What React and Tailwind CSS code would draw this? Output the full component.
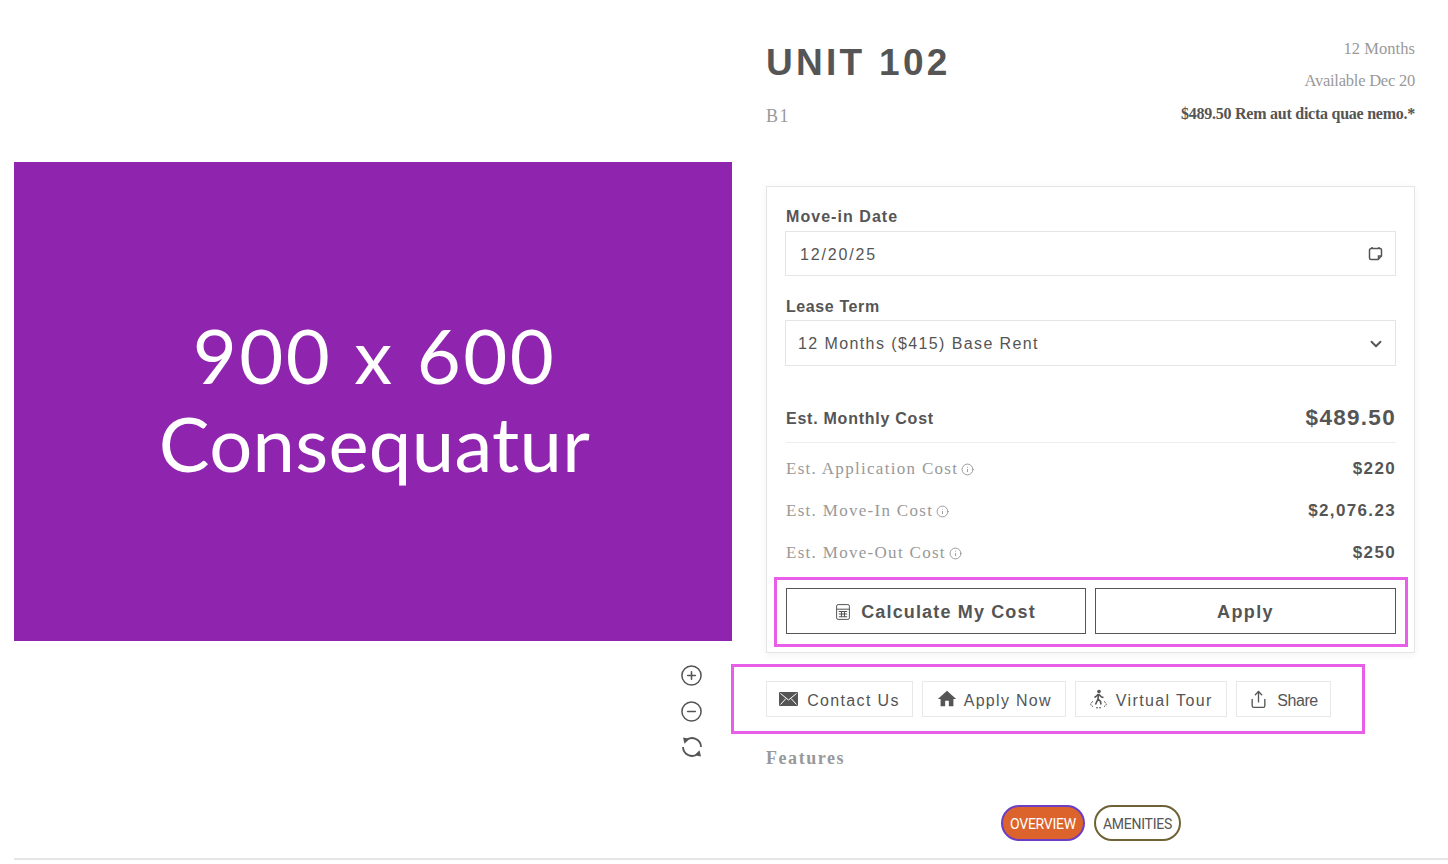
import { ChevronDown, CircleMinus, CirclePlus, Info, Share } from "lucide-react";
import { MdHome } from "react-icons/md";

const sans = "font-['Liberation_Sans',Arial,sans-serif]";
const serif = "font-['Liberation_Serif','Times_New_Roman',serif]";

const CalendarIcon = () => (
  <svg width="15" height="15" viewBox="0 0 15 15" fill="none" stroke="#555" strokeWidth="1.5">
    <path d="M3 2.5h9a1.5 1.5 0 0 1 1.5 1.5v6l-3.500 3.500H3a1.500 1.500 0 0 1-1.500-1.500V4A1.500 1.500 0 0 1 3 2.500z" />
    <path d="M13.500 10h-3v3.500" />
    <path d="M4 1v2M11 1v2" />
  </svg>
);

const CalculatorIcon = () => (
  <svg width="14" height="16" viewBox="0 0 14 16" fill="none" stroke="#555" strokeWidth="1">
    <rect x="0.600" y="0.600" width="12.800" height="14.800" rx="1.500" />
    <path d="M0.600 5.200h12.800" />
    <path d="M2.800 7.500h8.400M2.800 10h8.400M2.800 12.800h8.400M5.500 7v6.300M8.500 7v6.300" strokeWidth="1.100" />
  </svg>
);

const MailIcon = () => (
  <svg width="19" height="14" viewBox="0 0 19 14">
    <rect width="19" height="14" rx="1" fill="#555" />
    <path d="M1.500 1.500 9.500 8l8-6.500M1.500 12.500 7 6.500M17.500 12.500 12 6.500" fill="none" stroke="#fff" strokeWidth="1" />
  </svg>
);

const TourIcon = () => (
  <svg width="19" height="20" viewBox="0 0 19 20" fill="none" stroke="#555">
    <circle cx="10" cy="2.500" r="1.800" fill="#555" stroke="none" />
    <path d="M9.500 5 7 7.500l-1.500 1M9.500 5l3 3 2 .5M9.500 5l-.5 5 2.500 2.500 .5 3M9 10l-2.500 5.500" strokeWidth="1.600" />
    <path d="M4 12.500c-3 1.500-3 4 0 5M15 12.500c3 1.500 3 4 0 5M7 18.800h5" strokeWidth="1" strokeDasharray="2 1" />
  </svg>
);

const RefreshIcon = () => (
  <svg width="22" height="22" viewBox="0 0 22 22" fill="none" stroke="#555" strokeWidth="1.800">
    <path d="M5 4.400A9 9 0 0 1 20 11" />
    <path d="M17 17.600A9 9 0 0 1 2 11" />
    <path d="M2 1.500l6.500 1.300-5 5z" fill="#555" stroke="none" />
    <path d="M20 20.500l-6.500-1.300 5-5z" fill="#555" stroke="none" />
  </svg>
);

const costs = [
  { label: "Est. Application Cost", value: "$220" },
  { label: "Est. Move-In Cost", value: "$2,076.23" },
  { label: "Est. Move-Out Cost", value: "$250" },
];

const actions = [
  { label: "Contact Us", icon: <MailIcon />, w: "w-[147px]", gap: "gap-[9px]", text: "tracking-[1.350px]" },
  { label: "Apply Now", icon: <MdHome size={22} color="#555" />, w: "w-[143.500px]", gap: "gap-[6px]", text: "tracking-[1.300px]" },
  { label: "Virtual Tour", icon: <TourIcon />, w: "w-[152.500px]", gap: "gap-[8px]", text: "tracking-[1.400px]" },
  { label: "Share", icon: <Share size={19} color="#555" strokeWidth={1.700} />, w: "w-[95px]", gap: "gap-[9px]", text: "tracking-[-0.400px]" },
];

export default function App() {
  return (
    <div className={`h-[864px] overflow-hidden bg-white ${sans}`}>
      <div className="flex pl-[14px]">
        {/* image + zoom controls */}
        <div className="w-[718px] pt-[162px]">
          <div className="flex h-[479px] flex-col items-center justify-center bg-[#8f25ae] pb-[5px] pl-[3px] text-white font-['Lato',sans-serif]">
            <div className="text-[76px] leading-[88px] tracking-[2.500px]">900 x 600</div>
            <div className="text-[76px] leading-[88px] tracking-[0.300px]">Consequatur</div>
          </div>
          <div className="flex flex-col items-end gap-[13px] pr-[29px] pt-[23px] text-[#555]">
            <CirclePlus size={23} strokeWidth={1.600} />
            <CircleMinus size={23} strokeWidth={1.600} />
            <RefreshIcon />
          </div>
        </div>

        {/* unit details */}
        <div className="ml-[34px] w-[649px]">
          <div className="flex h-[186px] justify-between">
            <div className="pt-[40px]">
              <h1 className="text-[37px] leading-[46px] font-bold tracking-[3.300px] text-[#555]">UNIT 102</h1>
              <div className={`${serif} pt-[18px] text-[18px] leading-[24px] tracking-[1.500px] text-[#999]`}>B1</div>
            </div>
            <div className={`${serif} pt-[33px] text-right text-[16.500px] leading-[32px] text-[#999]`}>
              <div className="tracking-[0.050px]">12 Months</div>
              <div className="tracking-[-0.230px]">Available Dec 20</div>
              <div className="pt-[1px] text-[16px] font-bold tracking-[-0.250px] text-[#555]">$489.50 Rem aut dicta quae nemo.*</div>
            </div>
          </div>

          <div className="h-[467px] border border-[#e5e5e5] pr-[18px] pl-[18px] pt-[20px] shadow-[0_2px_8px_rgba(0,0,0,0.05)]">
            <div className="pl-[1px] text-[16px] leading-[20px] font-bold tracking-[1.050px] text-[#555]">Move-in Date</div>
            <div className="mt-[4px] flex h-[45px] items-center justify-between border border-[#e5e5e5] pl-[14px] pr-[12px]">
              <span className="pt-[2px] text-[16px] tracking-[1.850px] text-[#555]">12/20/25</span>
              <CalendarIcon />
            </div>

            <div className="mt-[21px] pl-[1px] text-[16px] leading-[20px] font-bold tracking-[0.600px] text-[#555]">Lease Term</div>
            <div className="mt-[3px] flex h-[46px] items-center justify-between border border-[#e5e5e5] pl-[12px] pr-[10px]">
              <span className="pt-[1px] text-[16px] tracking-[1.400px] text-[#555]">12 Months ($415) Base Rent</span>
              <ChevronDown size={18} color="#555" strokeWidth={2.500} className="mt-[2px]" />
            </div>

            <div className="ml-[1px] mt-[34px] flex h-[43px] items-center justify-between border-b border-[#eeeeee] pb-[5px]">
              <span className="text-[16px] font-bold tracking-[0.750px] text-[#555]">Est. Monthly Cost</span>
              <span className="pb-[2px] text-[22.500px] font-bold tracking-[1.300px] text-[#555]">$489.50</span>
            </div>

            <div className="pl-[1px] pt-[5px]">
              {costs.map((c) => (
                <div key={c.label} className="flex h-[42px] items-center justify-between">
                  <span className="flex items-center gap-[3px]">
                    <span className={`${serif} text-[17px] tracking-[1.300px] text-[#999]`}>{c.label}</span>
                    <Info size={13} color="#888" strokeWidth={1.500} />
                  </span>
                  <span className="text-[17px] font-bold tracking-[1.350px] text-[#555]">{c.value}</span>
                </div>
              ))}
            </div>

            <div className="-ml-[11px] -mr-[12px] mt-[3px] flex h-[70px] items-center gap-[9px] border-[3px] border-[#e95ee9] pb-[2px] pl-[9px] pr-[9px]">
              <button className="flex h-[46px] w-[300px] items-center justify-center gap-[11px] border border-[#555] pt-[2px] text-[18px] font-bold tracking-[1.150px] text-[#555]">
                <CalculatorIcon />
                <span className="pt-[1px]">Calculate My Cost</span>
              </button>
              <button className="flex h-[46px] flex-1 items-center justify-center border border-[#555] pt-[3px] text-[18px] font-bold tracking-[1.350px] text-[#555]">
                Apply
              </button>
            </div>
          </div>

          <div className="-ml-[35px] mt-[11px] flex h-[70px] w-[634px] items-center gap-[9px] border-[3px] border-[#e95ee9] pl-[32px]">
            {actions.map((a) => (
              <div key={a.label} className={`flex h-[36px] items-center justify-center border border-[#e8e8e8] text-[#555] ${a.w} ${a.gap}`}>
                {a.icon}
                <span className={`pt-[3px] text-[16px] ${a.text}`}>{a.label}</span>
              </div>
            ))}
          </div>

          <div className={`${serif} pt-[12px] text-[18px] leading-[24px] font-bold tracking-[1.550px] text-[#999]`}>Features</div>

          <div className="flex gap-[9px] pl-[235px] pt-[35px] font-['Roboto',sans-serif] text-[14px] tracking-[-0.250px]">
            <div className="flex h-[36px] w-[84px] items-center justify-center rounded-full border-2 border-[#6a3fc4] bg-[#dc642c] pt-[2px] text-white">OVERVIEW</div>
            <div className="flex h-[36px] w-[87px] items-center justify-center rounded-full border-2 border-[#6f6236] pt-[2px] text-[#555]">AMENITIES</div>
          </div>
        </div>
      </div>
      <div className="ml-[14px] mt-[17px] border-t-2 border-[#e5e5e5]" />
    </div>
  );
}
